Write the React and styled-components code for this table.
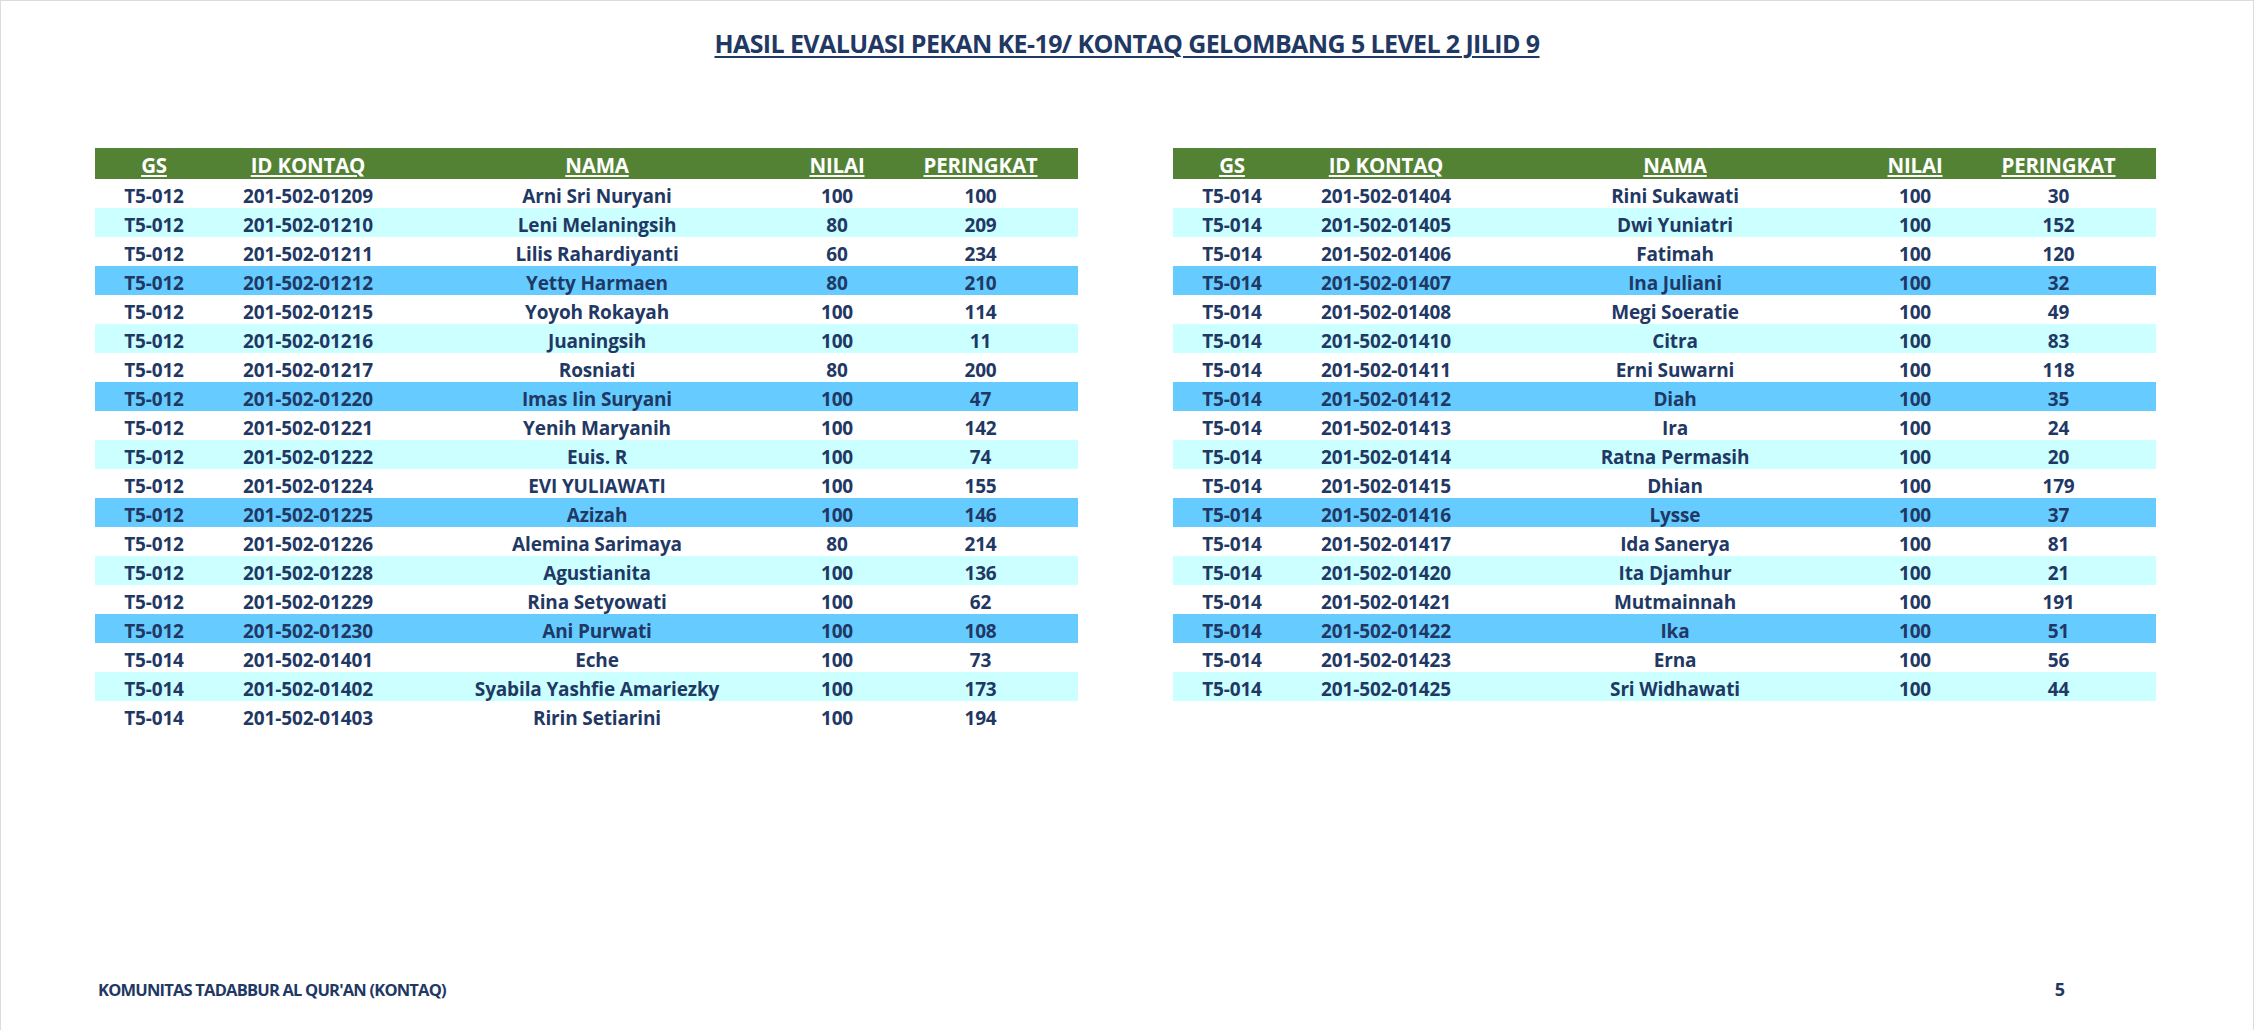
import React from 'react'
import styled, { createGlobalStyle } from 'styled-components'

const GlobalStyle = createGlobalStyle`
    html, body {
        margin: 0;
        padding: 0;
        background: #ffffff;
    }
    * {
        box-sizing: border-box;
    }
`

const Page = styled.div`
    width: 2254px;
    height: 1030px;
    display: flex;
    flex-direction: column;
    background: #ffffff;
    border-top: 1px solid #dcdcdc;
    border-left: 1px solid #dcdcdc;
    border-right: 1px solid #dcdcdc;
    font-family: "Open Sans", "Noto Sans", sans-serif;
    font-weight: 700;
    color: #1f3864;
    padding-bottom: 28px;
`

const Title = styled.h1`
    margin: 25px 0 0 0;
    text-align: center;
    font-size: 25px;
    line-height: 34px;
    letter-spacing: -0.6px;
    font-weight: 700;
    color: #1f3864;
    text-decoration: underline;
    text-decoration-thickness: 2px;
    text-underline-offset: 3px;
`

const Tables = styled.div`
    display: flex;
    gap: 95px;
    padding-left: 94px;
    margin-top: 88px;
`

const Table = styled.div`
    display: grid;
    grid-template-columns: 118px 190px 388px 92px 195px;
    width: 983px;
    align-self: flex-start;
`

const HeadRow = styled.div`
    display: contents;
`

const HeadCell = styled.div`
    height: 31px;
    padding-top: 3px;
    line-height: 28px;
    background: #548235;
    color: #ffffff;
    font-size: 20.5px;
    letter-spacing: -0.2px;
    text-align: center;
    white-space: nowrap;

    span {
        text-decoration: underline;
        text-decoration-thickness: 2px;
        text-underline-offset: 2px;
    }
`

const toneColors = {
    plain: '#ffffff',
    light: '#ccffff',
    strong: '#66ccff',
}

const Cell = styled.div`
    height: 29px;
    padding-top: 6px;
    line-height: 23px;
    font-size: 19px;
    letter-spacing: -0.15px;
    text-align: center;
    white-space: nowrap;
    background: ${(p) => toneColors[p.$tone]};
`

const Footer = styled.div`
    margin-top: auto;
    display: flex;
    justify-content: space-between;
    padding: 0 188px 0 97px;
    font-size: 16.5px;
    line-height: 25px;
    letter-spacing: -0.8px;
`

const PageNumber = styled.span`
    font-size: 18px;
    letter-spacing: 0;
`

const columns = ['GS', 'ID KONTAQ', 'NAMA', 'NILAI', 'PERINGKAT']

const leftRows = [
    ['T5-012', '201-502-01209', 'Arni Sri Nuryani', '100', '100'],
    ['T5-012', '201-502-01210', 'Leni Melaningsih', '80', '209'],
    ['T5-012', '201-502-01211', 'Lilis Rahardiyanti', '60', '234'],
    ['T5-012', '201-502-01212', 'Yetty Harmaen', '80', '210'],
    ['T5-012', '201-502-01215', 'Yoyoh Rokayah', '100', '114'],
    ['T5-012', '201-502-01216', 'Juaningsih', '100', '11'],
    ['T5-012', '201-502-01217', 'Rosniati', '80', '200'],
    ['T5-012', '201-502-01220', 'Imas Iin Suryani', '100', '47'],
    ['T5-012', '201-502-01221', 'Yenih Maryanih', '100', '142'],
    ['T5-012', '201-502-01222', 'Euis. R', '100', '74'],
    ['T5-012', '201-502-01224', 'EVI YULIAWATI', '100', '155'],
    ['T5-012', '201-502-01225', 'Azizah', '100', '146'],
    ['T5-012', '201-502-01226', 'Alemina Sarimaya', '80', '214'],
    ['T5-012', '201-502-01228', 'Agustianita', '100', '136'],
    ['T5-012', '201-502-01229', 'Rina Setyowati', '100', '62'],
    ['T5-012', '201-502-01230', 'Ani Purwati', '100', '108'],
    ['T5-014', '201-502-01401', 'Eche', '100', '73'],
    ['T5-014', '201-502-01402', 'Syabila Yashfie Amariezky', '100', '173'],
    ['T5-014', '201-502-01403', 'Ririn Setiarini', '100', '194'],
]

const rightRows = [
    ['T5-014', '201-502-01404', 'Rini Sukawati', '100', '30'],
    ['T5-014', '201-502-01405', 'Dwi Yuniatri', '100', '152'],
    ['T5-014', '201-502-01406', 'Fatimah', '100', '120'],
    ['T5-014', '201-502-01407', 'Ina Juliani', '100', '32'],
    ['T5-014', '201-502-01408', 'Megi Soeratie', '100', '49'],
    ['T5-014', '201-502-01410', 'Citra', '100', '83'],
    ['T5-014', '201-502-01411', 'Erni Suwarni', '100', '118'],
    ['T5-014', '201-502-01412', 'Diah', '100', '35'],
    ['T5-014', '201-502-01413', 'Ira', '100', '24'],
    ['T5-014', '201-502-01414', 'Ratna Permasih', '100', '20'],
    ['T5-014', '201-502-01415', 'Dhian', '100', '179'],
    ['T5-014', '201-502-01416', 'Lysse', '100', '37'],
    ['T5-014', '201-502-01417', 'Ida Sanerya', '100', '81'],
    ['T5-014', '201-502-01420', 'Ita Djamhur', '100', '21'],
    ['T5-014', '201-502-01421', 'Mutmainnah', '100', '191'],
    ['T5-014', '201-502-01422', 'Ika', '100', '51'],
    ['T5-014', '201-502-01423', 'Erna', '100', '56'],
    ['T5-014', '201-502-01425', 'Sri Widhawati', '100', '44'],
]

// white, cyan, white, blue - repeats every 4 rows
const tones = ['plain', 'light', 'plain', 'strong']

function ResultTable({ rows }) {
    return (
        <Table>
            <HeadRow>
                {columns.map((c) => (
                    <HeadCell key={c}><span>{c}</span></HeadCell>
                ))}
            </HeadRow>
            {rows.map((row, i) =>
                row.map((value, j) => (
                    <Cell key={i + '-' + j} $tone={tones[i % 4]}>{value}</Cell>
                ))
            )}
        </Table>
    )
}

export default function App() {
    return (
        <>
            <GlobalStyle />
            <Page>
                <Title>HASIL EVALUASI PEKAN KE-19/ KONTAQ GELOMBANG 5 LEVEL 2 JILID 9</Title>
                <Tables>
                    <ResultTable rows={leftRows} />
                    <ResultTable rows={rightRows} />
                </Tables>
                <Footer>
                    <span>KOMUNITAS TADABBUR AL QUR'AN (KONTAQ)</span>
                    <PageNumber>5</PageNumber>
                </Footer>
            </Page>
        </>
    )
}
